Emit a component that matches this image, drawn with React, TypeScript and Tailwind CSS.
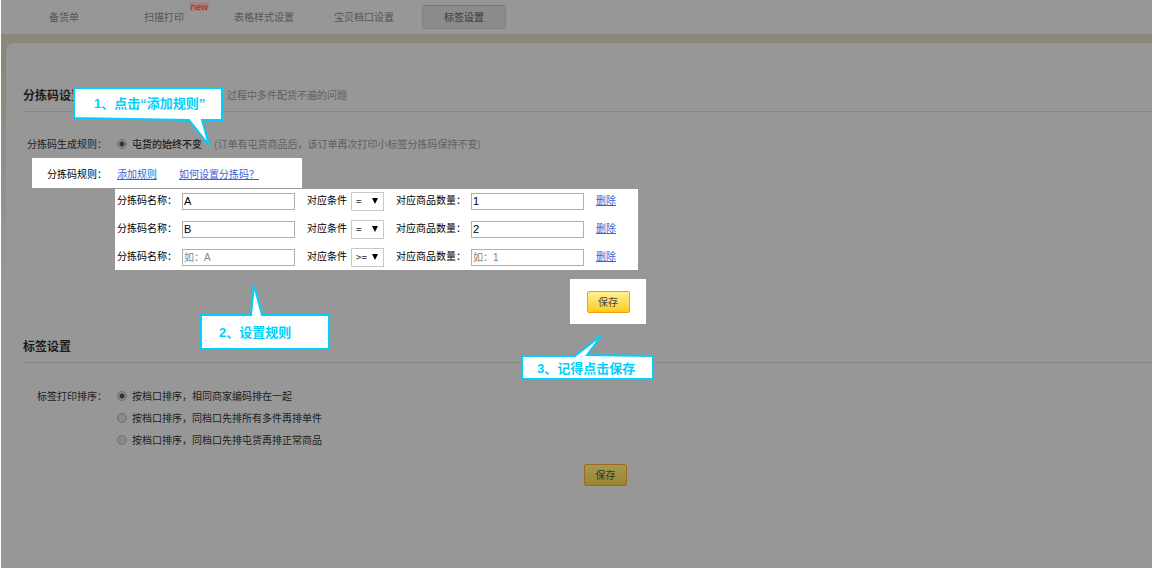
import { useState } from "react";
import clsx from "clsx";

const tabs = ["备货单", "扫描打印", "表格样式设置", "宝贝档口设置", "标签设置"];

const rules = [
  { name: "A", condition: "=", count: "1" },
  { name: "B", condition: "=", count: "2" },
  { name: "", condition: ">=", count: "" },
];

const sortOptions = [
  "按档口排序，相同商家编码排在一起",
  "按档口排序，同档口先排所有多件再排单件",
  "按档口排序，同档口先排屯货再排正常商品",
];

const radioClass =
  "h-[10px] w-[10px] shrink-0 appearance-none rounded-full border border-[#707070] bg-[#8a8a8a] checked:bg-[radial-gradient(circle,#333_0_2px,#8a8a8a_3px)]";

const inputClass =
  "h-[17px] w-[113px] border border-[#b0b0b0] bg-white px-px font-['Liberation_Sans','Noto_Sans_CJK_SC',sans-serif] text-[11px] leading-[15px] text-black outline-none placeholder:text-[10px] placeholder:text-[#858585]";

const linkClass = "text-[#3c5fd6] underline underline-offset-1";

const SaveButton = ({ dimmed = false }: { dimmed?: boolean }) => (
  <button
    type="button"
    className={clsx(
      "block h-[22px] w-[43px] rounded-[2px] border text-center text-[10px] leading-5",
      dimmed
        ? "border-[#a3691a] bg-linear-to-b from-[#a39a55] to-[#9c842a] text-[#333]"
        : "border-[#f59b14] bg-linear-to-b from-[#fff08a] to-[#ffcc00] text-[#444]"
    )}
  >
    保存
  </button>
);

const SectionTitle = ({ title, note }: { title: string; note?: string }) => (
  <div className="flex items-center border-b border-[#868686] pb-1 leading-6">
    <h2 className="w-[204px] text-[12px] font-bold text-[#1c1c1c]">{title}</h2>
    {note && <p className="text-[#606060]">{note}</p>}
  </div>
);

const RuleRow = ({ rule, index }: { rule: (typeof rules)[number]; index: number }) => (
  <div className="flex h-5 items-center leading-[18px]">
    <label htmlFor={`name-${index}`} className="w-[65px] self-start">
      分拣码名称：
    </label>
    <input
      id={`name-${index}`}
      className={inputClass}
      defaultValue={rule.name}
      placeholder="如：A"
    />
    <label htmlFor={`condition-${index}`} className="ml-3 w-11 self-start">
      对应条件
    </label>
    <div className="relative">
      <select
        id={`condition-${index}`}
        defaultValue={rule.condition}
        className="block h-[19px] w-[33px] appearance-none border border-[#c8c8c8] bg-white pl-1 text-[10px] leading-4 text-[#222]"
      >
        <option>=</option>
        <option>&gt;=</option>
      </select>
      <svg
        viewBox="0 0 6 6"
        className="pointer-events-none absolute top-1.5 right-1.5 h-1.5 w-1.5"
      >
        <path d="M0 0h6L3 6z" fill="#000" />
      </svg>
    </div>
    <label htmlFor={`count-${index}`} className="ml-3 w-[75px] self-start">
      对应商品数量：
    </label>
    <input
      id={`count-${index}`}
      className={inputClass}
      defaultValue={rule.count}
      placeholder="如：1"
    />
    <a href="#" className={clsx("ml-3 self-start", linkClass)}>
      删除
    </a>
  </div>
);

const calloutText =
  "absolute font-['Liberation_Sans','Noto_Sans_CJK_SC',sans-serif] text-[13px] leading-5 font-bold whitespace-nowrap text-[#00d0fa]";

// Guide bubbles float over the form they explain
const Callouts = () => (
  <>
    <div className="absolute top-[86px] left-[71px] h-[64px] w-[153px]">
      <svg viewBox="0 0 153 64" className="h-full w-full">
        <path
          d="M2 2H150V34H130L137 59L117 34L2 32Z"
          fill="#fff"
          stroke="#00d0fa"
          strokeWidth="2"
        />
      </svg>
      <p className={clsx(calloutText, "top-2 left-[22px]")}>1、点击“添加规则”</p>
    </div>
    <div className="absolute top-[278px] left-[198px] h-[73px] w-[132px]">
      <svg viewBox="0 0 132 73" className="h-full w-full">
        <path
          d="M2 37H52L55 7L63 37H130V71H2Z"
          fill="#fff"
          stroke="#00d0fa"
          strokeWidth="2"
        />
      </svg>
      <p className={clsx(calloutText, "top-[45px] left-5")}>2、设置规则</p>
    </div>
    <div className="absolute top-[330px] left-[519px] h-[52px] w-[135px]">
      <svg viewBox="0 0 135 52" className="h-full w-full">
        <path
          d="M2 26H55L82 5L67 25L133 26V49H2Z"
          fill="#fff"
          stroke="#00d0fa"
          strokeWidth="2"
        />
      </svg>
      <p className={clsx(calloutText, "top-[29px] left-[17px]")}>3、记得点击保存</p>
    </div>
  </>
);

const App = () => {
  const [sort, setSort] = useState(0);

  return (
    <div className="relative flex min-h-screen flex-col border-l border-white bg-[#979797] bg-linear-to-b from-[#8a877b] from-10% to-[#979797] to-50% font-['Noto_Sans_CJK_SC',sans-serif] text-[10px] leading-5 text-[#1c1c1c]">
      <nav className="flex h-[34px] gap-4 bg-[#979797] pt-[5px] pl-[21px]">
        {tabs.map((tab, i) => (
          <button
            key={tab}
            type="button"
            className={clsx(
              "relative h-6 w-[84px] rounded-[2px] border text-center leading-[22px]",
              i === tabs.length - 1
                ? "border-[#818181] border-t-[#757575] bg-[#8b8b8b] font-medium text-[#484848]"
                : "border-transparent text-[#555]"
            )}
          >
            {tab}
            {i === 1 && (
              <span className="absolute -top-1 -right-1 rounded-[2px] bg-[#a38580] px-px font-['Open_Sans',sans-serif] text-[9px] leading-[9px] text-[#b3131d]">
                new
              </span>
            )}
          </button>
        ))}
      </nav>

      <main className="mt-[9px] ml-[5px] flex-1 rounded-tl-lg bg-[#979797] pt-10 pl-[17px]">
        <section>
          <SectionTitle title="分拣码设置" note="过程中多件配货不遍的问题" />

          <div className="mt-[22px] flex items-center">
            <span className="w-[84px] text-right">分拣码生成规则：</span>
            <label className="ml-[10px] flex items-center gap-[5px]">
              <input type="radio" name="mode" defaultChecked className={radioClass} />
              <span className="font-medium">屯货的始终不变</span>
            </label>
            <span className="ml-3 text-[#606060]">
              (订单有屯货商品后，该订单再次打印小标签分拣码保持不变)
            </span>
          </div>

          <div className="mt-1 ml-[9px] flex w-[270px] bg-white pt-1.5 pb-1 text-black">
            <span className="w-[75px] text-right">分拣码规则：</span>
            <a href="#" className={clsx("ml-[10px]", linkClass)}>
              添加规则
            </a>
            <a href="#" className={clsx("ml-[22px]", linkClass)}>
              如何设置分拣码？
            </a>
          </div>

          <div className="mt-px ml-[92px] flex w-[523px] flex-col gap-2 bg-white pt-0.5 pb-[3px] pl-0.5 text-black">
            {rules.map((rule, i) => (
              <RuleRow key={i} rule={rule} index={i} />
            ))}
          </div>

          <div className="mt-[9px] ml-[547px] flex h-[45px] w-[76px] items-center justify-center bg-white">
            <SaveButton />
          </div>
        </section>

        <section className="mt-[10px]">
          <SectionTitle title="标签设置" />

          <div className="mt-[23px] flex">
            <span className="w-[84px] text-right">标签打印排序：</span>
            <div className="ml-[10px] flex flex-col gap-0.5">
              {sortOptions.map((option, i) => (
                <label key={option} className="flex items-center gap-[5px]">
                  <input
                    type="radio"
                    name="sort"
                    checked={sort === i}
                    onChange={() => setSort(i)}
                    className={radioClass}
                  />
                  {option}
                </label>
              ))}
            </div>
          </div>

          <div className="mt-3.5 ml-[561px]">
            <SaveButton dimmed />
          </div>
        </section>
      </main>

      <Callouts />
    </div>
  );
};

export default App;
